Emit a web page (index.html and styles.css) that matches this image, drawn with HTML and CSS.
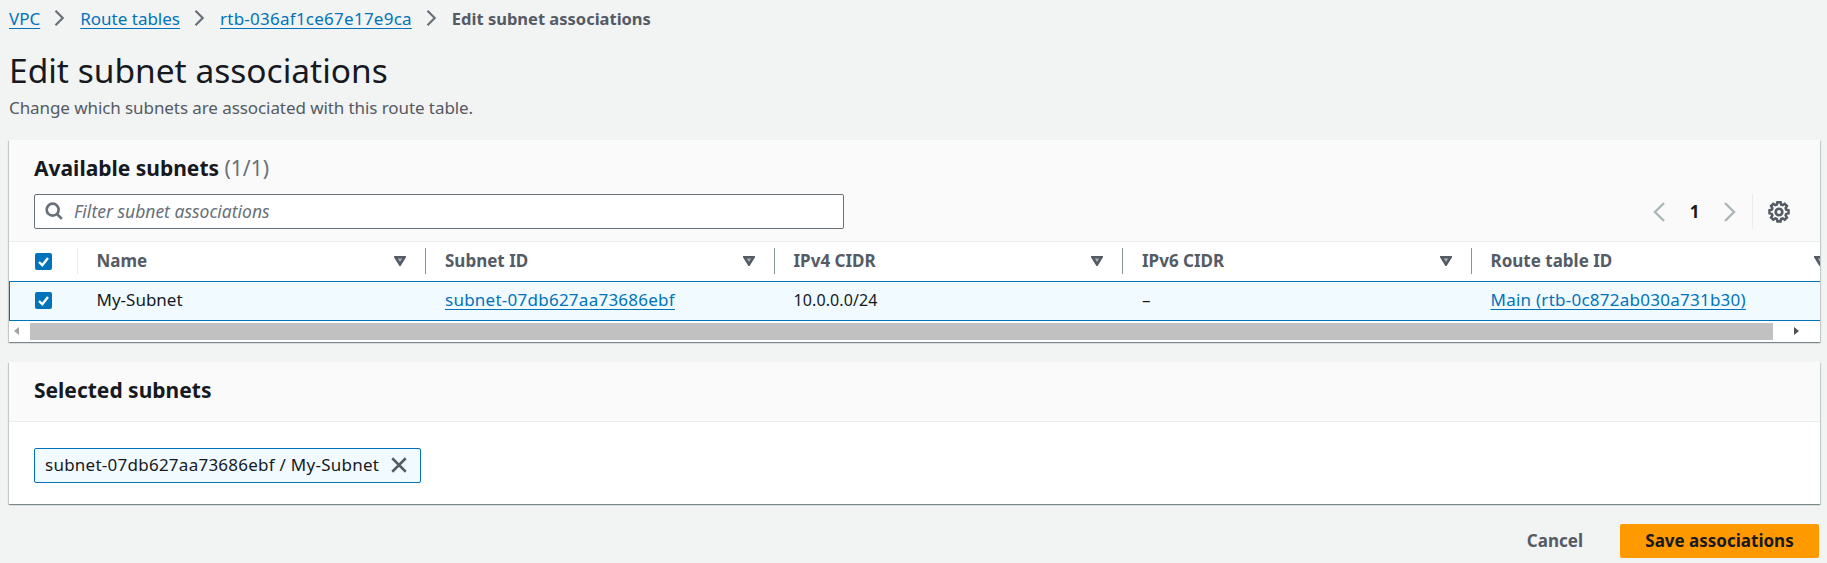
FILE: index.html
```html
<!DOCTYPE html>
<html lang="en">
<head>
  <meta charset="UTF-8" />
  <title>Edit subnet associations</title>
  <link rel="stylesheet" href="styles.css">
</head>
<body>
  <nav class="crumbs">
    <a href="#">VPC</a>
    <svg class="crumb-sep" viewBox="0 0 16 16"><path d="M3.5 .8 L10.7 8 L3.5 15.2"/></svg>
    <a href="#">Route tables</a>
    <svg class="crumb-sep" viewBox="0 0 16 16"><path d="M3.5 .8 L10.7 8 L3.5 15.2"/></svg>
    <a class="id-text" href="#">rtb-036af1ce67e17e9ca</a>
    <svg class="crumb-sep" viewBox="0 0 16 16"><path d="M3.5 .8 L10.7 8 L3.5 15.2"/></svg>
    <span class="crumb-current">Edit subnet associations</span>
  </nav>

  <h1>Edit subnet associations</h1>
  <p class="lead">Change which subnets are associated with this route table.</p>

  <section class="card">
    <div class="card-head">
      <h2>Available subnets <span class="count">(1/1)</span></h2>
      <div class="tools">
        <div class="filter">
          <svg class="filter-icon" viewBox="0 0 16 16"><circle cx="6.8" cy="6.8" r="5.3"/><path d="M10.6 10.6 L15 15"/></svg>
          <span>Filter subnet associations</span>
        </div>
        <div class="pager">
          <svg class="pager-arrow" viewBox="0 0 14 22"><path d="M12 2 L3 11 L12 20"/></svg>
          <span class="page-num">1</span>
          <svg class="pager-arrow" viewBox="0 0 14 22"><path d="M2 2 L11 11 L2 20"/></svg>
          <div class="gear-box">
            <svg class="gear" viewBox="0 0 20 20">
              <path d="M8.5 1.5h3l.5 2.2 1.5.6 1.9-1.2 2.1 2.1-1.2 1.9.6 1.5 2.1.5v3l-2.1.5-.6 1.5 1.2 1.9-2.1 2.1-1.9-1.2-1.5.6-.5 2.2h-3l-.5-2.2-1.5-.6-1.9 1.2-2.1-2.1 1.2-1.9-.6-1.5-2.1-.5v-3l2.1-.5.6-1.5-1.2-1.9 2.1-2.1 1.9 1.2 1.5-.6z" transform="translate(.4 -.4) scale(.96)"/>
              <circle cx="10" cy="10" r="3"/>
            </svg>
          </div>
        </div>
      </div>
    </div>

    <div class="table-wrap">
      <table class="subnets">
        <thead>
          <tr>
            <th class="col-check"><span class="check"><svg viewBox="0 0 17 17"><path d="M4 9 L7.3 12.2 L13 5"/></svg></span></th>
            <th class="col-data"><div class="th-in">Name<svg class="sort" viewBox="0 0 12 10"><path d="M1.5 1.2 H10.5 L6 8.5 Z"/></svg></div></th>
            <th class="col-data"><div class="th-in">Subnet ID<svg class="sort" viewBox="0 0 12 10"><path d="M1.5 1.2 H10.5 L6 8.5 Z"/></svg></div></th>
            <th class="col-data"><div class="th-in">IPv4 CIDR<svg class="sort" viewBox="0 0 12 10"><path d="M1.5 1.2 H10.5 L6 8.5 Z"/></svg></div></th>
            <th class="col-data"><div class="th-in">IPv6 CIDR<svg class="sort" viewBox="0 0 12 10"><path d="M1.5 1.2 H10.5 L6 8.5 Z"/></svg></div></th>
            <th class="col-last"><div class="th-in">Route table ID<svg class="sort" viewBox="0 0 12 10"><path d="M1.5 1.2 H10.5 L6 8.5 Z"/></svg></div></th>
          </tr>
        </thead>
        <tbody>
          <tr class="selected">
            <td><span class="check"><svg viewBox="0 0 17 17"><path d="M4 9 L7.3 12.2 L13 5"/></svg></span></td>
            <td>My-Subnet</td>
            <td><a class="id-text" href="#">subnet-07db627aa73686ebf</a></td>
            <td class="cidr">10.0.0.0/24</td>
            <td>–</td>
            <td><a class="id-text" href="#">Main (rtb-0c872ab030a731b30)</a></td>
          </tr>
        </tbody>
      </table>
    </div>

    <div class="hscroll">
      <span class="tri tri-left"></span>
      <div class="thumb"></div>
      <span class="tri tri-right"></span>
    </div>
  </section>

  <section class="card card-selected">
    <div class="selected-head">
      <h2>Selected subnets</h2>
    </div>
    <div class="selected-body">
      <div class="token">
        <span class="id-text">subnet-07db627aa73686ebf / My-Subnet</span>
        <svg class="token-x" viewBox="0 0 16 16"><path d="M2 2 L14 14 M14 2 L2 14"/></svg>
      </div>
    </div>
  </section>

  <div class="actions">
    <a class="btn-cancel" href="#">Cancel</a>
    <button class="btn-save">Save associations</button>
  </div>
</body>
</html>
```

FILE: styles.css
```css
* {
  box-sizing: border-box;
}

html, body {
  height: 100%;
}

body {
  margin: 0;
  padding: 0 7px 0 9px;
  background: #f2f3f3;
  color: #16191f;
  font-family: "Noto Sans", Roboto, sans-serif;
  font-size: 17px;
  overflow: hidden;
}

a {
  color: #0073bb;
  text-decoration: underline;
  text-underline-offset: 3px;
}

.id-text {
  letter-spacing: .25px;
}

.crumbs {
  display: flex;
  align-items: center;
  height: 38px;
  margin-top: -1px;
}

.crumb-sep {
  width: 16px;
  height: 16px;
  margin: 0 12px;
  fill: none;
  stroke: #687078;
  stroke-width: 2.2;
}

.crumb-current {
  color: #545b64;
  font-size: 16.5px;
  font-weight: 700;
}

h1 {
  margin: 14px 0 0;
  font-size: 33.5px;
  line-height: 38px;
  font-weight: 400;
}

.lead {
  margin: 9px 0 0;
  font-size: 17px;
  line-height: 20px;
  letter-spacing: -.08px;
  color: #545b64;
}

.card {
  background: #fff;
  box-shadow: 0 1px 1px 0 rgba(0,28,36,.3), 1px 1px 1px 0 rgba(0,28,36,.15), -1px 1px 1px 0 rgba(0,28,36,.15);
  margin-top: 22px;
}

.card-head {
  background: #fafafa;
  padding: 16px 0 12px 25px;
  border-bottom: 1px solid #eaeded;
}

h2 {
  margin: 0;
  font-size: 21px;
  line-height: 24px;
  font-weight: 700;
}

.count {
  font-weight: 400;
  color: #687078;
}

.tools {
  display: flex;
  justify-content: space-between;
  align-items: center;
  margin-top: 14px;
  padding-right: 14px;
}

.filter {
  display: flex;
  align-items: center;
  gap: 11px;
  width: 810px;
  height: 35px;
  padding-left: 10px;
  padding-bottom: 1px;
  background: #fff;
  border: 1px solid #687078;
  border-radius: 2px;
  font-size: 17.5px;
  font-style: italic;
  color: #687078;
}

.filter-icon {
  width: 18px;
  height: 18px;
  fill: none;
  stroke: #687078;
  stroke-width: 2.4;
}

.pager {
  display: flex;
  align-items: center;
}

.pager-arrow {
  width: 14px;
  height: 22px;
  fill: none;
  stroke: #aab7b8;
  stroke-width: 2.4;
}

.page-num {
  width: 57px;
  text-align: center;
  font-weight: 700;
}

.gear-box {
  display: flex;
  justify-content: center;
  align-items: center;
  width: 54px;
  height: 35px;
  margin-left: 15px;
  padding-right: 2px;
  border-left: 1px solid #eaeded;
}

.gear {
  width: 22px;
  height: 22px;
  fill: none;
  stroke: #545b64;
  stroke-width: 2.4;
}

.table-wrap {
  overflow: hidden;
}

.subnets {
  border-collapse: collapse;
  table-layout: fixed;
  width: 1836px;
}

.subnets th {
  height: 39px;
  padding: 0;
  text-align: left;
  color: #545b64;
  font-weight: 700;
}

.subnets .col-check {
  width: 67px;
  padding-left: 25px;
}

.col-data {
  width: 348.5px;
}

.th-in {
  display: flex;
  justify-content: space-between;
  align-items: center;
  height: 26px;
  padding: 0 19px 2px 19px;
  border-left: 1px solid #879596;
}

.col-data:nth-child(2) .th-in {
  border-left-color: #eaeded;
}

.sort {
  width: 12px;
  height: 10px;
  margin-top: 2px;
  fill: #aab7b8;
  stroke: #545b64;
  stroke-width: 2.6;
}

.check {
  display: flex;
  align-items: center;
  justify-content: center;
  width: 17px;
  height: 17px;
  background: #0073bb;
  border-radius: 2px;
}

.check svg {
  width: 17px;
  height: 17px;
  fill: none;
  stroke: #fff;
  stroke-width: 2.4;
}

.selected td {
  height: 39px;
  padding: 0 0 2px 20px;
  background: #f1faff;
  border-top: 1px solid #0073bb;
  border-bottom: 1px solid #0073bb;
}

.selected td:first-child {
  padding: 0 0 0 25px;
  border-left: 1px solid #0073bb;
}

.selected .cidr {
  font-size: 16px;
  letter-spacing: .1px;
}

.hscroll {
  display: flex;
  align-items: center;
  height: 21px;
  padding: 0 5px;
  background: #fff;
}

.thumb {
  width: 1743px;
  height: 17px;
  margin: 0 21px 0 11px;
  background: #c1c1c1;
}

.tri {
  width: 0;
  height: 0;
  border-top: 4px solid transparent;
  border-bottom: 4px solid transparent;
}

.tri-left {
  border-right: 5px solid #a3a3a3;
}

.tri-right {
  border-left: 5px solid #505050;
}

.card-selected {
  margin-top: 20px;
}

.selected-head {
  background: #fafafa;
  padding: 16px 25px;
  height: 60px;
  border-bottom: 1px solid #eaeded;
}

.selected-body {
  padding: 26px 25px 21px;
}

.token {
  display: inline-flex;
  align-items: center;
  gap: 11px;
  height: 35px;
  padding: 0 12px 2px 10px;
  background: #f1faff;
  border: 1px solid #0073bb;
  border-radius: 2px;
}

.token-x {
  width: 18px;
  height: 18px;
  margin-top: 2px;
  fill: none;
  stroke: #545b64;
  stroke-width: 2.2;
}

.actions {
  display: flex;
  justify-content: flex-end;
  align-items: center;
  margin-top: 20px;
  padding-right: 1px;
}

.btn-cancel {
  color: #545b64;
  font-weight: 700;
  text-decoration: none;
  margin-right: 37px;
}

.btn-save {
  width: 199px;
  height: 34px;
  background: #ff9900;
  border: none;
  border-radius: 2px;
  color: #16191f;
  font-family: inherit;
  font-size: 17px;
  font-weight: 700;
}
```
